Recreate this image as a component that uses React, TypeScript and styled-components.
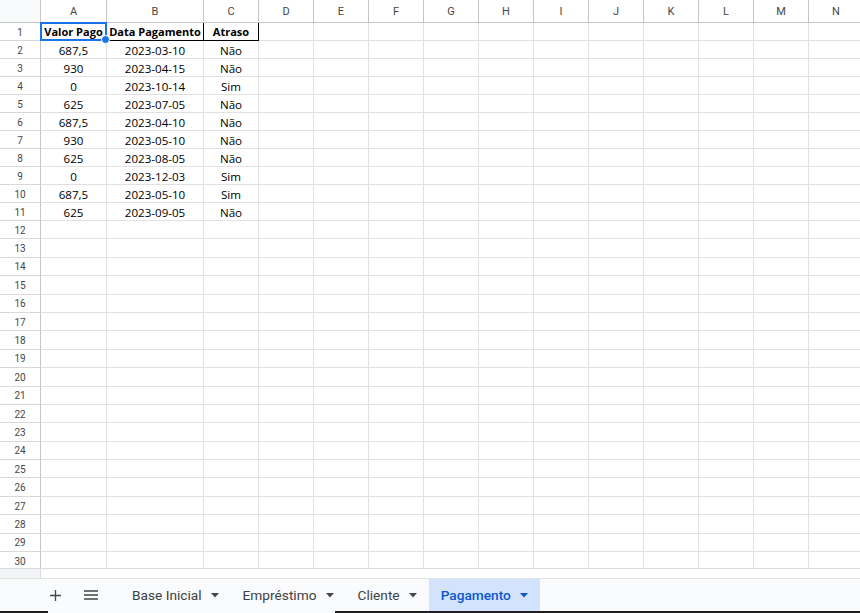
import styled, { createGlobalStyle } from 'styled-components';

const GlobalStyle = createGlobalStyle`
  html, body {
    margin: 0;
    padding: 0;
    background: #ffffff;
    overflow: hidden;
  }
  body {
    font-family: Roboto, "Liberation Sans", Arial, sans-serif;
  }
`;

const columns = ['A', 'B', 'C', 'D', 'E', 'F', 'G', 'H', 'I', 'J', 'K', 'L', 'M', 'N'];

const header = ['Valor Pago', 'Data Pagamento', 'Atraso'];

const data = [
  ['687,5', '2023-03-10', 'Não'],
  ['930', '2023-04-15', 'Não'],
  ['0', '2023-10-14', 'Sim'],
  ['625', '2023-07-05', 'Não'],
  ['687,5', '2023-04-10', 'Não'],
  ['930', '2023-05-10', 'Não'],
  ['625', '2023-08-05', 'Não'],
  ['0', '2023-12-03', 'Sim'],
  ['687,5', '2023-05-10', 'Sim'],
  ['625', '2023-09-05', 'Não'],
];

const tabs = ['Base Inicial', 'Empréstimo', 'Cliente', 'Pagamento'];

const TOTAL_ROWS = 30;

function cellValue(row: number, col: number) {
  if (col > 2) return '';
  if (row === 1) return header[col];
  const line = data[row - 2];
  return line ? line[col] : '';
}

function Caret() {
  return (
    <svg width="8" height="5" viewBox="0 0 8 5">
      <path d="M0 0h8L4 4.5z" fill="currentColor" />
    </svg>
  );
}

export default function App() {
  const rowNumbers = Array.from({ length: TOTAL_ROWS }, (_, i) => i + 1);

  return (
    <Page>
      <GlobalStyle />
      <GridWrap>
        <Grid>
          <Corner />
          {columns.map((c) => (
            <ColHeader key={c}>{c}</ColHeader>
          ))}
          {rowNumbers.map((r) => [
            <RowHeader key={`h${r}`}>{r}</RowHeader>,
            ...columns.map((c, ci) => (
              <Cell
                key={`${c}${r}`}
                $bold={r === 1}
                $darkRight={r === 1 && (ci === 1 || ci === 2)}
                $darkBottom={r === 1 && (ci === 1 || ci === 2)}
              >
                {cellValue(r, ci)}
              </Cell>
            )),
          ])}
        </Grid>
        <Selection>
          <Handle />
        </Selection>
      </GridWrap>
      <ScrollStrip>
        <StripCorner />
      </ScrollStrip>
      <TabBar>
        <IconButton>
          <svg width="11" height="11" viewBox="0 0 11 11">
            <path d="M5.5 0v11M0 5.5h11" stroke="#444746" strokeWidth="1.3" />
          </svg>
        </IconButton>
        <IconButton>
          <svg width="14" height="10" viewBox="0 0 14 10">
            <path d="M0 1h14M0 5h14M0 9h14" stroke="#444746" strokeWidth="1.4" />
          </svg>
        </IconButton>
        <Tabs>
          {tabs.map((t) => (
            <Tab key={t} $active={t === 'Pagamento'}>
              {t}
              <Caret />
            </Tab>
          ))}
        </Tabs>
      </TabBar>
      <BottomEdge>
        <EdgeSegment $width={48} />
        <EdgeGap $width={287} />
        <EdgeSegment />
      </BottomEdge>
    </Page>
  );
}

const Page = styled.div`
  width: 860px;
  height: 613px;
  display: flex;
  flex-direction: column;
  overflow: hidden;
  background: #ffffff;
`;

const GridWrap = styled.div`
  position: relative;
  height: 568px;
  overflow: hidden;
  flex: none;
`;

const Grid = styled.div`
  display: grid;
  grid-template-columns: 41px 66px 97px 55px repeat(11, 55px);
  grid-template-rows: 23px repeat(11, 18px) repeat(19, 18.4px);
  width: max-content;
`;

const Corner = styled.div`
  background: #f8f9fa;
  border-right: 1px solid #c4c7c5;
  border-bottom: 1px solid #c4c7c5;
  box-sizing: border-box;
`;

const ColHeader = styled.div`
  box-sizing: border-box;
  border-right: 1px solid #c4c7c5;
  border-bottom: 1px solid #c4c7c5;
  display: flex;
  align-items: center;
  justify-content: center;
  font-size: 11px;
  color: #444746;
  background: #ffffff;
`;

const RowHeader = styled.div`
  box-sizing: border-box;
  border-right: 1px solid #c4c7c5;
  border-bottom: 1px solid #d9d9d9;
  display: flex;
  align-items: center;
  justify-content: center;
  padding-top: 1px;
  font-size: 10px;
  color: #444746;
  background: #ffffff;
`;

const Cell = styled.div<{ $bold?: boolean; $darkRight?: boolean; $darkBottom?: boolean }>`
  box-sizing: border-box;
  border-right: 1px solid ${(p) => (p.$darkRight ? '#000000' : '#e1e1e1')};
  border-bottom: 1px solid ${(p) => (p.$darkBottom ? '#000000' : '#e1e1e1')};
  display: flex;
  align-items: center;
  justify-content: center;
  padding-top: ${(p) => (p.$bold ? 0 : 2)}px;
  font-family: "Open Sans", "Liberation Sans", sans-serif;
  font-size: ${(p) => (p.$bold ? 11 : 11.6)}px;
  font-weight: ${(p) => (p.$bold ? 700 : 400)};
  color: #000000;
  white-space: nowrap;
  overflow: hidden;
`;

const Selection = styled.div`
  position: absolute;
  left: 40px;
  top: 22px;
  width: 67px;
  height: 19px;
  box-sizing: border-box;
  border: 2px solid #1a73e8;
  pointer-events: none;
`;

const Handle = styled.div`
  position: absolute;
  right: -5px;
  bottom: -5px;
  width: 7px;
  height: 7px;
  border-radius: 50%;
  background: #1a73e8;
  border: 1px solid #ffffff;
`;

const ScrollStrip = styled.div`
  height: 10px;
  flex: none;
  display: flex;
  border-top: 1px solid #dadce0;
  box-sizing: border-box;
  background: #ffffff;
`;

const StripCorner = styled.div`
  width: 41px;
  background: #f1f3f4;
  border-right: 1px solid #dadce0;
  box-sizing: border-box;
`;

const TabBar = styled.div`
  flex: 1;
  display: flex;
  align-items: stretch;
  background: #f9fbfd;
  border-top: 1px solid #e1e3e1;
  padding-left: 37px;
`;

const IconButton = styled.div`
  width: 36px;
  display: flex;
  align-items: center;
  justify-content: center;
`;

const Tabs = styled.div`
  display: flex;
  align-items: stretch;
  margin-left: 11px;
`;

const Tab = styled.div<{ $active?: boolean }>`
  display: flex;
  align-items: center;
  gap: 9px;
  padding: 0 12px;
  font-family: Roboto, "Liberation Sans", sans-serif;
  font-size: 13.7px;
  font-weight: ${(p) => (p.$active ? 500 : 400)};
  color: ${(p) => (p.$active ? '#0b57d0' : '#3c4043')};
  background: ${(p) => (p.$active ? '#d3e3fd' : 'transparent')};
  svg {
    color: ${(p) => (p.$active ? '#0b57d0' : '#444746')};
  }
`;

const BottomEdge = styled.div`
  height: 2px;
  flex: none;
  display: flex;
  background: #f9fbfd;
`;

const EdgeSegment = styled.div<{ $width?: number }>`
  flex: ${(p) => (p.$width ? `0 0 ${p.$width}px` : '1')};
  background: #1f1f1f;
`;

const EdgeGap = styled.div<{ $width: number }>`
  flex: 0 0 ${(p) => p.$width}px;
`;
